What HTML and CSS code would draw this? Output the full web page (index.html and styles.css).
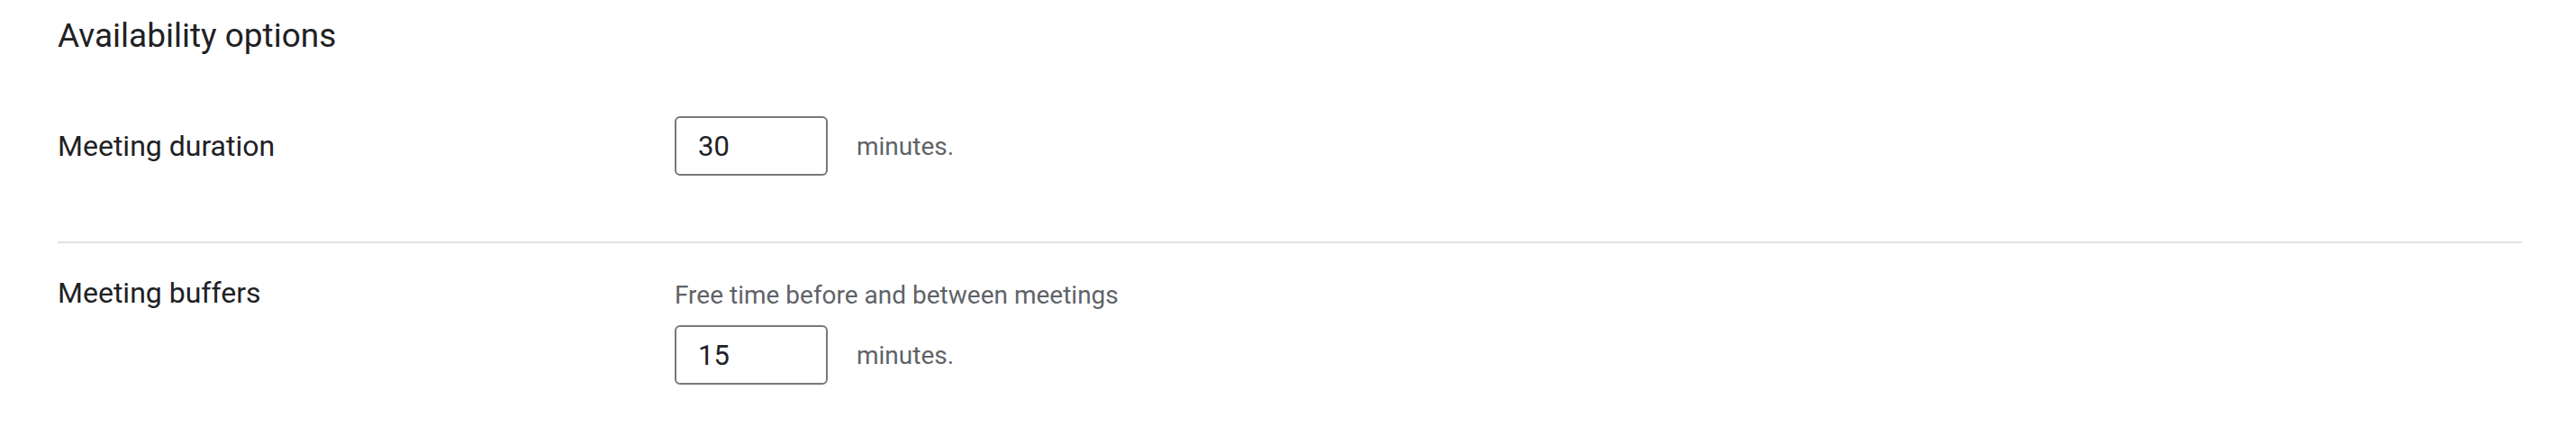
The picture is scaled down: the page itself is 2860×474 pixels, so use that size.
FILE: index.html
```html
<!DOCTYPE html>
<html lang="en">
<head>
    <meta charset="UTF-8">
    <title>Availability options</title>
    <link rel="stylesheet" href="styles.css">
</head>
<body>
    <main class="options">
        <h2 class="options-title">Availability options</h2>

        <section class="option-row option-row--divided">
            <div class="option-label">Meeting duration</div>
            <div class="option-control">
                <div class="field-line">
                    <input class="num-field" type="text" value="30">
                    <span class="unit">minutes.</span>
                </div>
            </div>
        </section>

        <section class="option-row option-row--top">
            <div class="option-label">Meeting buffers</div>
            <div class="option-control">
                <p class="hint">Free time before and between meetings</p>
                <div class="field-line">
                    <input class="num-field" type="text" value="15">
                    <span class="unit">minutes.</span>
                </div>
            </div>
        </section>
    </main>
</body>
</html>
```

FILE: styles.css
```css
* {
    margin: 0;
    padding: 0;
    box-sizing: border-box;
    font-family: Roboto, 'Liberation Sans', sans-serif;
}

body {
    background: #fff;
    color: #202124;
}

.options {
    padding: 0 60px 0 64px;
}

.options-title {
    font-size: 37px;
    font-weight: 400;
    line-height: 44px;
    padding-top: 18px;
}

.option-row {
    display: grid;
    grid-template-columns: 685px 1fr;
    align-items: center;
}

.option-row--divided {
    padding: 67px 0 73px;
    border-bottom: 2px solid #e0e0e0;
}

.option-row--top {
    align-items: start;
    padding-top: 40px;
}

.option-row--top .option-label {
    margin-top: -3px;
}

.option-label {
    font-size: 32px;
    line-height: 36px;
}

.hint {
    font-size: 28px;
    line-height: 36px;
    color: #5f6368;
    margin-bottom: 15px;
}

.field-line {
    display: flex;
    align-items: center;
    gap: 32px;
}

.num-field {
    width: 170px;
    height: 66px;
    border: 2px solid #777;
    border-radius: 6px;
    padding-left: 24px;
    font-size: 31px;
    color: #202124;
    outline: none;
}

.unit {
    font-size: 28px;
    color: #5f6368;
}
```
